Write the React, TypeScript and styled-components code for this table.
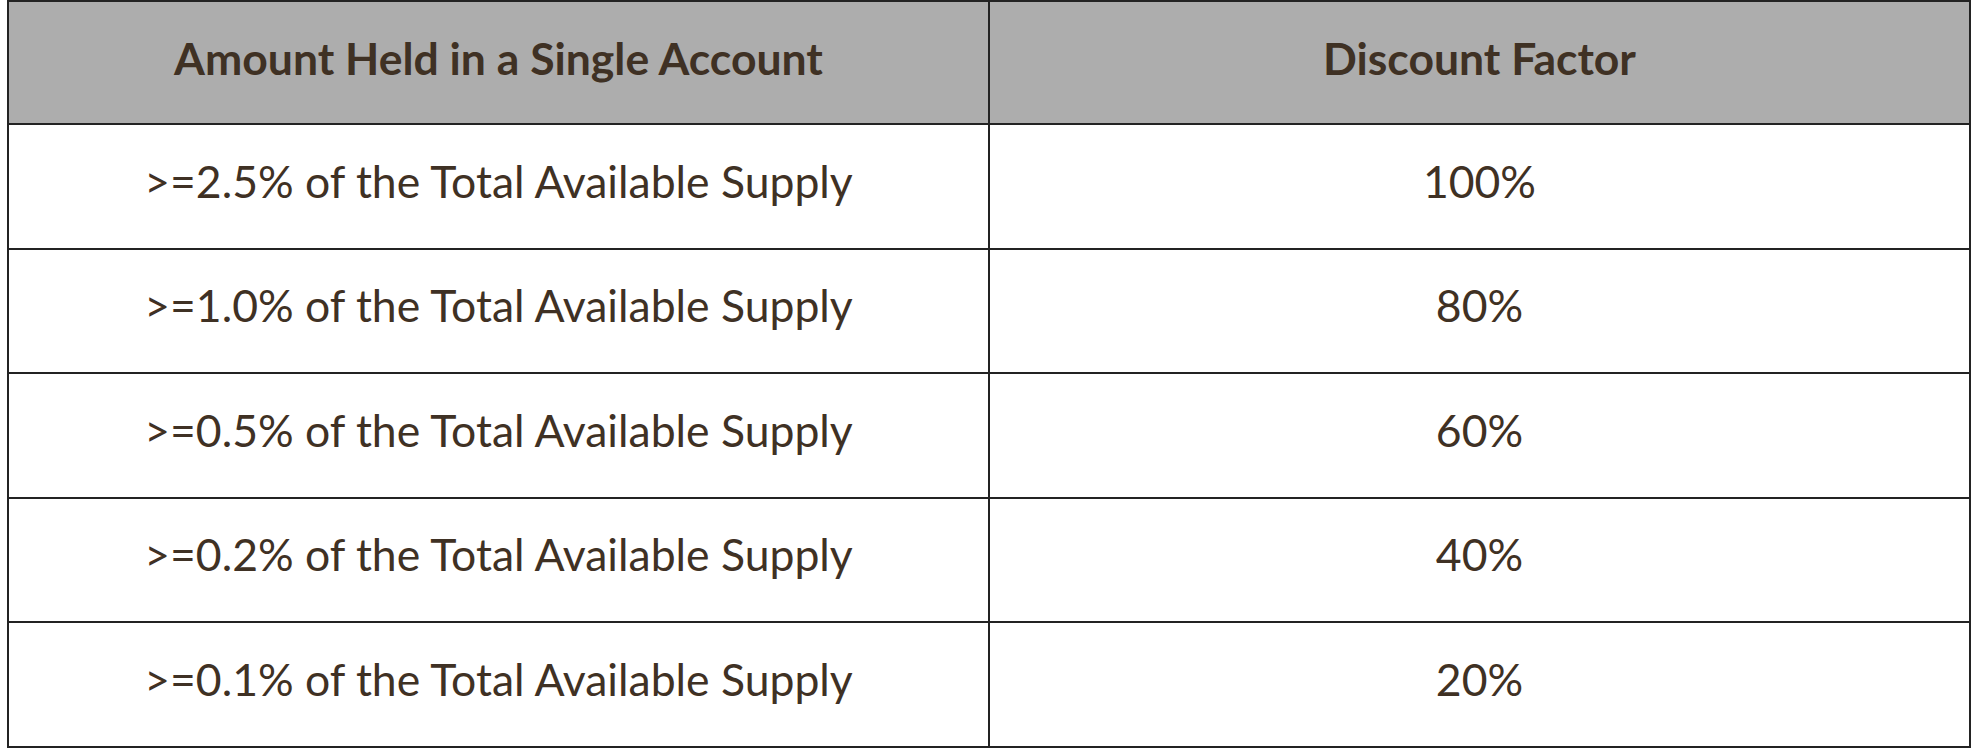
import React from "react";
import styled, { createGlobalStyle } from "styled-components";

const Global = createGlobalStyle`
  html, body { margin: 0; padding: 0; background: #ffffff; }
  body { font-family: Lato, "Open Sans", sans-serif; }
`;

const Page = styled.div`
  padding: 0 3px 0 7px;
  width: 1964px;
`;

const Table = styled.table`
  width: 1964px;
  border-collapse: collapse;
  table-layout: fixed;
  color: #3f3124;
`;

const HeadCell = styled.th`
  height: 111px;
  padding: 0 0 10px 0;
  background: #adadad;
  border: 2px solid #232323;
  font-family: Lato, sans-serif;
  font-weight: 700;
  font-size: 44.5px;
  line-height: 1.2;
  text-align: center;
  vertical-align: middle;
`;

const Cell = styled.td`
  height: 110.5px;
  padding: 0 0 12px 0;
  border: 2px solid #232323;
  font-family: Lato, sans-serif;
  font-weight: 400;
  font-size: 44.5px;
  line-height: 1.2;
  text-align: center;
  vertical-align: middle;
`;

const rows: [string, string][] = [
  [">=2.5% of the Total Available Supply", "100%"],
  [">=1.0% of the Total Available Supply", "80%"],
  [">=0.5% of the Total Available Supply", "60%"],
  [">=0.2% of the Total Available Supply", "40%"],
  [">=0.1% of the Total Available Supply", "20%"],
];

export default function App() {
  return (
    <Page>
      <Global />
      <Table>
        <thead>
          <tr>
            <HeadCell>Amount Held in a Single Account</HeadCell>
            <HeadCell>Discount Factor</HeadCell>
          </tr>
        </thead>
        <tbody>
          {rows.map(([a, b]) => (
            <tr key={a}>
              <Cell>{a}</Cell>
              <Cell>{b}</Cell>
            </tr>
          ))}
        </tbody>
      </Table>
    </Page>
  );
}
